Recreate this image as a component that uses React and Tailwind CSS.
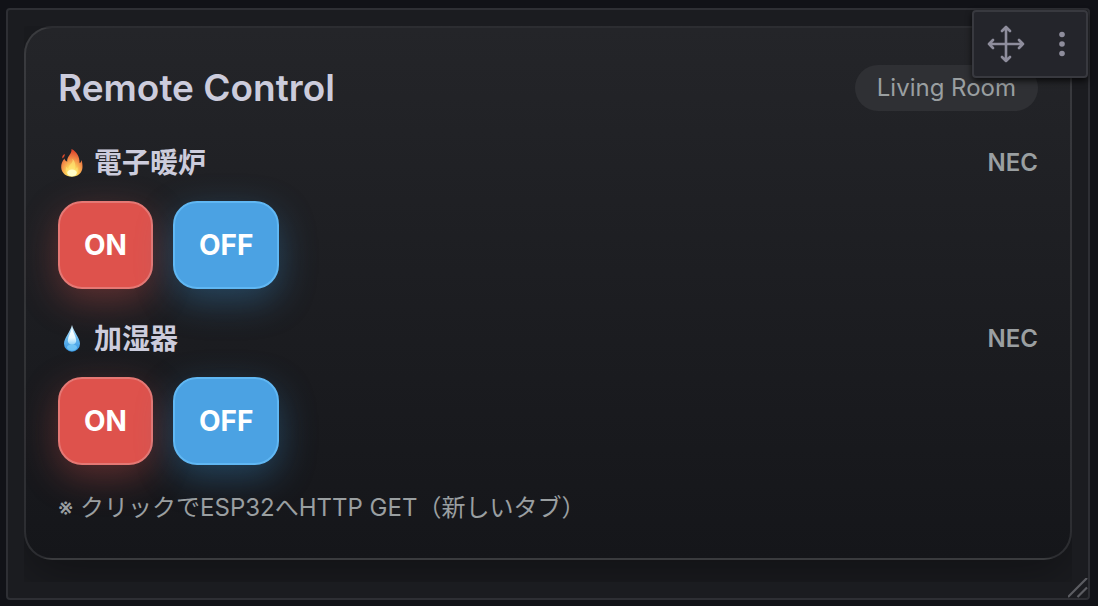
import React from "react";

function FlameIcon() {
  return (
    <svg viewBox="0 0 28 30" className="h-[30px] w-7 shrink-0" aria-hidden="true">
      <defs>
        <radialGradient id="flame" cx="0.5" cy="0.86" r="0.8">
          <stop offset="0" stopColor="#fffbb0" />
          <stop offset="0.3" stopColor="#fdd65a" />
          <stop offset="0.62" stopColor="#f4924a" />
          <stop offset="1" stopColor="#e0452c" />
        </radialGradient>
      </defs>
      <path
        d="M13.500 1c.4 3-1.400 5.200-3 7.500-1 1.600-1.500 3.200-1.300 5.200C7.700 13 6.600 12 6.500 10.500 4.200 13.200 3 16 3.200 19.400c.3 5.400 4.800 9.300 10.600 9.300 6.200 0 10.500-4 10.700-9.500.1-2.700-.3-5.200-1-7.300-.3 1.500-.9 2.600-1.900 3.200.1-6.300-2.700-11.500-8.100-14.100Z"
        fill="url(#flame)"
      />
      <path d="M6.800 6C4.800 6.900 3.900 8.300 4.400 10.400 6.100 9.500 6.800 8 6.800 6Z" fill="#dc4a2c" />
      <path
        d="M14.300 10.500c1.200 3.700-1.500 5-3 7.300-.8 1.300-.9 2.300-.5 3.300-1.300-.5-2-1.300-2.300-2.500-2 4.600.1 8.900 5.400 8.900 5.300 0 7.300-4.500 5.100-8.700-.3 1.300-.9 2.100-1.900 2.600.7-4.500.1-8.100-2.800-10.900Z"
        fill="#fde272"
        opacity="0.7"
      />
      <ellipse cx="14" cy="24.800" rx="4.800" ry="3.400" fill="#fffdc9" />
    </svg>
  );
}

function DropIcon() {
  return (
    <svg viewBox="0 0 28 30" className="h-[30px] w-7 shrink-0" aria-hidden="true">
      <defs>
        <linearGradient id="drop" x1="0" y1="0" x2="0" y2="1">
          <stop offset="0" stopColor="#d8f2fd" />
          <stop offset="0.5" stopColor="#68b9ee" />
          <stop offset="1" stopColor="#3393e2" />
        </linearGradient>
        <linearGradient id="shine" x1="0" y1="0" x2="0" y2="1">
          <stop offset="0" stopColor="#ffffff" />
          <stop offset="0.6" stopColor="#e9f9ff" />
          <stop offset="1" stopColor="#8fd2f8" />
        </linearGradient>
      </defs>
      <path d="M14 1C12.500 7.500 6 14 6 19.700a8 8 0 0 0 16 0C22 14 15.500 7.500 14 1Z" fill="url(#drop)" />
      <ellipse cx="14" cy="23.500" rx="5" ry="3.200" fill="#7fd0fa" opacity="0.7" />
      <path d="M14 4c-1 4.500-4.200 8.700-4.200 12.800 0 2.400 1.700 3.700 4.200 3.700s4.200-1.300 4.200-3.700C18.200 12.700 15 8.500 14 4Z" fill="url(#shine)" />
    </svg>
  );
}

function PanelToolbar() {
  return (
    <div className="absolute top-0 right-0 flex rounded border-2 border-[#38393f] bg-[#24252b] text-[#8e8d9c] shadow-[0_3px_6px_rgba(0,0,0,0.7)]">
      <button type="button" aria-label="Move panel" className="grid h-16 w-16 place-items-center">
        <svg
          viewBox="0 0 40 40"
          className="size-10"
          fill="none"
          stroke="currentColor"
          strokeWidth="2.600"
          strokeLinecap="round"
          strokeLinejoin="round"
          aria-hidden="true"
        >
          <path d="M20 3v34M3 20h34M16 7l4-4 4 4M16 33l4 4 4-4M7 16l-4 4 4 4M33 16l4 4-4 4" />
        </svg>
      </button>
      <button type="button" aria-label="Panel menu" className="grid h-16 w-12 place-items-center">
        <svg viewBox="0 0 8 26" className="h-[26px] w-2" fill="currentColor" aria-hidden="true">
          <circle cx="4" cy="3.500" r="2.800" />
          <circle cx="4" cy="13" r="2.800" />
          <circle cx="4" cy="22.500" r="2.800" />
        </svg>
      </button>
    </div>
  );
}

function Device({ icon, name, protocol }) {
  return (
    <section className="mb-[27px]">
      <div className="mb-[15px] flex items-center justify-between">
        <h3 className="flex items-center gap-2 text-[28px]/[46px] font-bold text-[#ccccdc]">
          {icon}
          {name}
        </h3>
        <span className="text-2xl/[46px] font-semibold text-[#9a9fa1]">{protocol}</span>
      </div>
      <div className="flex gap-5 text-[28px]/[84px] font-bold text-white">
        <button
          type="button"
          className="rounded-3xl border-2 border-[#e57874] bg-[#de524c] px-6 shadow-[0_12px_36px_rgba(222,82,76,0.35)]"
        >
          ON
        </button>
        <button
          type="button"
          className="rounded-3xl border-2 border-[#60b7f3] bg-[#4ba2e3] px-6 shadow-[0_12px_36px_rgba(58,150,215,0.35)]"
        >
          OFF
        </button>
      </div>
    </section>
  );
}

export default function App() {
  return (
    <main className="flex min-h-screen flex-col bg-[#111217] pt-2 pr-2 pb-1.5 pl-1.5 font-[Inter,'Noto_Sans_CJK_JP',sans-serif]">
      <div className="relative flex flex-1 flex-col rounded border-2 border-[#2e2f34] bg-[#1b1c20] p-4">
        <div className="flex-1 overflow-hidden">
          <article className="rounded-[28px] border-2 border-white/10 bg-linear-to-b from-[#242529] to-[#15161a] px-8 pt-8 pb-[30px] shadow-[0_16px_48px_rgba(0,0,0,0.35)]">
            <header className="mb-6 flex h-14 items-center justify-between">
              <h2 className="text-[37px]/[56px] font-semibold text-[#ccccdc]">Remote Control</h2>
              <span className="rounded-full bg-[#2f3034] px-[22px] text-2xl/[46px] text-[#9a9fa1]">Living Room</span>
            </header>
            <Device icon={<FlameIcon />} name="電子暖炉" protocol="NEC" />
            <Device icon={<DropIcon />} name="加湿器" protocol="NEC" />
            <p className="-mt-1 text-2xl/[40px] text-[#9a9fa1]">
              ※ クリックでESP32へHTTP GET（新しいタブ）
            </p>
          </article>
        </div>
        <PanelToolbar />
        <svg
          viewBox="0 0 20 20"
          className="absolute right-0 bottom-0 size-5"
          stroke="#5c5d62"
          strokeWidth="2.200"
          aria-hidden="true"
        >
          <path d="M0 19 19 0M9.500 19 19 9.500" />
        </svg>
      </div>
    </main>
  );
}
